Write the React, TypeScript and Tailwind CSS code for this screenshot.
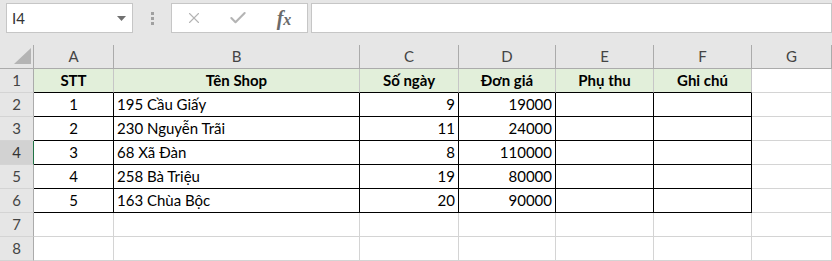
import { Check, X } from "lucide-react";

const cols = ["A", "B", "C", "D", "E", "F", "G"];

const headers = ["STT", "Tên Shop", "Số ngày", "Đơn giá", "Phụ thu", "Ghi chú"];

const rows = [
  { stt: 1, shop: "195 Cầu Giấy", days: 9, price: 19000 },
  { stt: 2, shop: "230 Nguyễn Trãi", days: 11, price: 24000 },
  { stt: 3, shop: "68 Xã Đàn", days: 8, price: 110000 },
  { stt: 4, shop: "258 Bà Triệu", days: 19, price: 80000 },
  { stt: 5, shop: "163 Chùa Bộc", days: 20, price: 90000 },
];

const grid =
  "grid grid-cols-[34px_80px_246px_99px_97px_98px_98px_80px_1fr]";

function RowHeader({ n, active }: { n: number; active?: boolean }) {
  return (
    <div
      className={
        active
          ? "flex h-6 items-center justify-center border-b border-r border-b-[#d4d4d4] border-r-[#217346] bg-[#d2d2d2] text-[15px] text-[#333]"
          : "flex h-6 items-center justify-center border-b border-r border-b-[#d4d4d4] border-r-[#ababab] bg-[#e6e6e6] text-[15px] text-[#444]"
      }
    >
      {n}
    </div>
  );
}

function Toolbar() {
  return (
    <div className="flex h-[45px] items-start bg-[#e6e6e6] pl-[6px] pt-[3px]">
      <div className="flex h-[30px] w-[127px] items-center justify-between border border-[#c6c6c6] bg-white pl-[5px] pr-[6px] text-[15px] text-[#333]">
        <span>I4</span>
        <svg width="9" height="5" viewBox="0 0 9 5">
          <polygon points="0,0 9,0 4.5,5" fill="#707070" />
        </svg>
      </div>
      <div className="flex h-[30px] w-[38px] flex-col items-center justify-center gap-[2px]">
        <span className="h-[3px] w-[3px] bg-[#a0a0a0]" />
        <span className="h-[3px] w-[3px] bg-[#a0a0a0]" />
        <span className="h-[3px] w-[3px] bg-[#a0a0a0]" />
      </div>
      <div className="flex h-[30px] w-[137px] items-center border border-[#c6c6c6] bg-white text-[#b4b4b4]">
        <div className="flex w-[44px] justify-center">
          <X size={18} strokeWidth={1.5} />
        </div>
        <div className="flex w-[44px] justify-center">
          <Check size={20} strokeWidth={2.5} />
        </div>
        <div className="flex w-[44px] justify-center pl-[4px] font-['Liberation_Serif',serif] text-[20px] font-bold italic leading-none text-[#6a6a6a]">
          <span>
            f<span className="text-[16px]">x</span>
          </span>
        </div>
      </div>
      <div className="ml-[3px] h-[30px] flex-1 border border-[#c6c6c6] bg-white" />
    </div>
  );
}

export default function App() {
  return (
    <div className="h-[261px] w-[832px] overflow-hidden bg-white font-['Lato','Noto_Sans',sans-serif] text-black">
      <Toolbar />

      <div className={grid}>
        <div className="relative h-6 border-b border-r border-[#ababab] bg-[#e6e6e6]">
          <svg
            className="absolute bottom-[4px] right-[2px]"
            width="17"
            height="16"
            viewBox="0 0 17 16"
          >
            <polygon points="17,0 17,16 0,16" fill="#b4b4b4" />
          </svg>
        </div>
        {cols.map((c) => (
          <div
            key={c}
            className="flex h-6 items-center justify-center border-b border-r border-[#ababab] bg-[#e6e6e6] text-[15px] text-[#444]"
          >
            {c}
          </div>
        ))}
        <div className="h-6 border-b border-[#ababab] bg-[#e6e6e6]" />

        <RowHeader n={1} />
        {headers.map((h) => (
          <div
            key={h}
            className="flex h-6 items-center justify-center border-b border-r border-b-black border-r-[#c6c6c6] bg-[#e2efda] text-[15px] font-bold"
          >
            {h}
          </div>
        ))}
        <div className="h-6 border-b border-r border-[#d4d4d4]" />
        <div className="h-6 border-b border-[#d4d4d4]" />

        {rows.map((r, i) => (
          <div key={r.stt} className="contents">
            <RowHeader n={i + 2} active={i === 2} />
            <div className="flex h-6 items-center justify-center border-b border-r border-black text-[15px]">
              {r.stt}
            </div>
            <div className="flex h-6 items-center border-b border-r border-black pl-[3px] text-[15px]">
              {r.shop}
            </div>
            <div className="flex h-6 items-center justify-end border-b border-r border-black pr-[3px] text-[15px]">
              {r.days}
            </div>
            <div className="flex h-6 items-center justify-end border-b border-r border-black pr-[3px] text-[15px]">
              {r.price}
            </div>
            <div className="h-6 border-b border-r border-black" />
            <div className="h-6 border-b border-r border-black" />
            <div className="h-6 border-b border-r border-[#d4d4d4]" />
            <div className="h-6 border-b border-[#d4d4d4]" />
          </div>
        ))}

        {[7, 8].map((n) => (
          <div key={n} className="contents">
            <RowHeader n={n} />
            {cols.map((c) => (
              <div key={c} className="h-6 border-b border-r border-[#d4d4d4]" />
            ))}
            <div className="h-6 border-b border-[#d4d4d4]" />
          </div>
        ))}
      </div>
    </div>
  );
}
